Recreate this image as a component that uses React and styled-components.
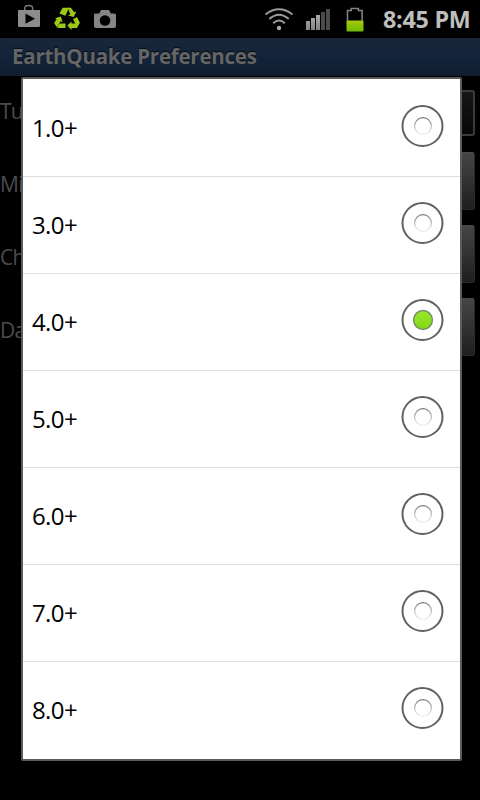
import React from 'react';
import styled, { createGlobalStyle } from 'styled-components';

const GlobalStyle = createGlobalStyle`
  * { box-sizing: border-box; }
  body { margin: 0; background: #000; overflow: hidden; }
`;

const Screen = styled.div`
  position: relative;
  width: 480px;
  height: 800px;
  overflow: hidden;
  background: #000;
  font-family: "Open Sans", "Noto Sans", sans-serif;
`;

const StatusBar = styled.header`
  display: flex;
  justify-content: space-between;
  height: 38px;
  background: #000;
`;

const StatusGroup = styled.div`
  display: flex;
  align-items: flex-start;
`;

const Clock = styled.time`
  width: 105px;
  padding-left: 8px;
  color: #bebebe;
  font: 700 23.3px/38px "Open Sans", "Noto Sans", sans-serif;
  letter-spacing: -0.25px;
  white-space: nowrap;
`;

const TitleBar = styled.h1`
  height: 38px;
  margin: 0;
  padding-left: 12px;
  background: linear-gradient(#1a2738, #12233a 55%, #101d2e);
  color: #656565;
  text-shadow: 0 -1px 1px #080c12;
  font-size: 20.5px;
  font-weight: 700;
  line-height: 36px;
  letter-spacing: -0.24px;
  white-space: nowrap;
`;

const PreferenceList = styled.main`
  display: flex;
  flex-direction: column;
`;

const Preference = styled.div`
  display: flex;
  align-items: center;
  justify-content: space-between;
  height: 58px;
  margin-bottom: 15px;
  padding-right: 5px;
  color: #4c4c4c;
  font-size: 21px;
  letter-spacing: -0.7px;
`;

const SwitchRow = styled(Preference)`
  height: 74px;
  margin-bottom: 2px;
`;

const PreferenceLabel = styled.span`
  white-space: nowrap;
  padding-top: ${({ $raised }) => ($raised ? 0 : 6)}px;
  padding-bottom: ${({ $raised }) => ($raised ? 4 : 0)}px;
`;

const ToggleField = styled.div`
  width: 60px;
  height: 46px;
  border: 2px solid #3b3b3b;
  border-radius: 3px;
  background: linear-gradient(#161616, #080808);
`;

const SelectButton = styled.div`
  width: 60px;
  height: 58px;
  border: 1px solid #292929;
  border-top-color: #4b4b4b;
  border-radius: 3px;
  background: linear-gradient(#464646, #1e1e1e);
`;

const Dialog = styled.section`
  position: absolute;
  top: 77px;
  left: 21px;
  width: 441px;
  height: 684px;
  padding-top: 1px;
  border: 2px solid #5b5b5b;
  border-radius: 2px;
  background: #fff;
`;

const Option = styled.div`
  display: flex;
  align-items: center;
  justify-content: space-between;
  height: 97px;
  padding: 0 16px 4px 9px;
  border-bottom: 1px solid #dedede;
  color: #000;
  font-size: 24px;
  letter-spacing: -0.6px;
  &:last-child { border-bottom-color: #fff; }
`;

const OptionLabel = styled.span`
  padding-top: 3px;
`;

const Icon = styled.svg`
  display: block;
  flex: none;
`;

function Radio({ checked }) {
  return (
    <Icon width="43" height="44" viewBox="0 0 43 44">
      <circle cx="21.5" cy="22" r="20" fill="#fff" stroke="#626262" strokeWidth="2" />
      {checked ? (
        <circle cx="22" cy="22" r="9.4" fill="url(#radioGreen)" stroke="#78916a" strokeWidth="1.5" />
      ) : (
        <circle cx="22" cy="22" r="8.4" fill="#fff" stroke="url(#radioHollow)" strokeWidth="1.2" />
      )}
    </Icon>
  );
}

function GradientDefs() {
  return (
    <defs>
      <linearGradient id="radioGreen" x1="0" y1="0" x2="0" y2="1">
        <stop stopColor="#9bea2c" /><stop offset="1" stopColor="#80d713" />
      </linearGradient>
      <linearGradient id="radioHollow" x1="0" y1="0" x2="0" y2="1">
        <stop stopColor="#777" /><stop offset=".5" stopColor="#bcbcbc" /><stop offset="1" stopColor="#eee" />
      </linearGradient>
      <linearGradient id="barGray" x1="0" y1="0" x2="0" y2="1">
        <stop stopColor="#aaa" /><stop offset="1" stopColor="#858585" />
      </linearGradient>
      <linearGradient id="batteryGreen" x1="0" y1="0" x2="0" y2="1">
        <stop stopColor="#a5c90d" /><stop offset="1" stopColor="#70b900" />
      </linearGradient>
    </defs>
  );
}

function Notifications() {
  return (
    <Icon width="130" height="38" viewBox="0 0 130 38">
      <GradientDefs />
      <path d="M24.8 10V8.2a3.9 2.7 0 0 1 7.8 0V10" fill="none" stroke="#777" strokeWidth="1.5" />
      <path d="M18 10h22v15.5q0 1.5-1.5 1.5h-19q-1.5 0-1.5-1.5z" fill="#8d8d8d" />
      <path d="M25.5 13.5 35 18.8l-9.500 5z" fill="#000" />
      <g fill="#9bc915">
        <path d="M59.4 13.4 62.700 7.700h6.300l-3.600 8z" />
        <path d="M67.700 7.700h3.200l3.100 4.300 2.300-.6-2.500 5.600-5.800-1.500 2.300-1.200z" />
        <path d="M73 19.200l4-2.200 2.900 5.700-3 5.200h-5.400v2.200L67.300 25.600l4.200-4.100v2.100h3.800z" />
        <path d="M55 18.300l5.800-1.700 1.900 5.700-2-1-3.900 6-2.700-4.200 2.500-4.200z" />
        <path d="M59.500 23.500h6v4.400h-7.200l-1.300-.6z" />
      </g>
      <path d="M95 13.500h4.300l1.700-3.500h8l1.800 3.500h3.700q1.500 0 1.500 1.500v11q0 2-2 2H96q-2 0-2-2V14.500q0-1 1-1z" fill="#858585" />
      <circle cx="105" cy="20.500" r="5.300" fill="#000" />
    </Icon>
  );
}

function SystemIcons() {
  return (
    <Icon width="115" height="38" viewBox="260 0 115 38">
      <g fill="none" stroke="#9a9a9a" strokeWidth="2">
        <path d="M265.500 14.500q13.500-10.500 27 0" />
        <path d="M269.300 19q9.700-8.500 19.400 0" />
        <path d="M273.200 23.200q5.800-5.400 11.600 0" />
      </g>
      <circle cx="279" cy="28" r="2.200" fill="#aaa" />
      <path d="M306 21h4v9h-4zm5-3h4v12h-4zm5-3h4v15h-4z" fill="url(#barGray)" />
      <path d="M321 12h4v18h-4zm5-3h4v21h-4z" fill="#4b4b4b" />
      <path d="M347.500 21V10.500h3.700v-2h7.200v2h3.700V21" fill="none" stroke="#858585" strokeWidth="1.500" />
      <rect x="346.500" y="20.500" width="17" height="11" rx="1" fill="url(#batteryGreen)" />
    </Icon>
  );
}

const magnitudes = ['1.0+', '3.0+', '4.0+', '5.0+', '6.0+', '7.0+', '8.0+'];
const preferences = ['Mi', 'Ch', 'Da'];

export default function App() {
  return (
    <Screen>
      <GlobalStyle />
      <StatusBar>
        <StatusGroup><Notifications /></StatusGroup>
        <StatusGroup><SystemIcons /><Clock>8:45 PM</Clock></StatusGroup>
      </StatusBar>
      <TitleBar>EarthQuake Preferences</TitleBar>
      <PreferenceList>
        <SwitchRow><PreferenceLabel $raised>Tu</PreferenceLabel><ToggleField /></SwitchRow>
        {preferences.map(label => (
          <Preference key={label}><PreferenceLabel>{label}</PreferenceLabel><SelectButton /></Preference>
        ))}
      </PreferenceList>
      <Dialog role="radiogroup">
        {magnitudes.map(label => (
          <Option key={label} role="radio" aria-checked={label === '4.0+'}>
            <OptionLabel>{label}</OptionLabel>
            <Radio checked={label === '4.0+'} />
          </Option>
        ))}
      </Dialog>
    </Screen>
  );
}
